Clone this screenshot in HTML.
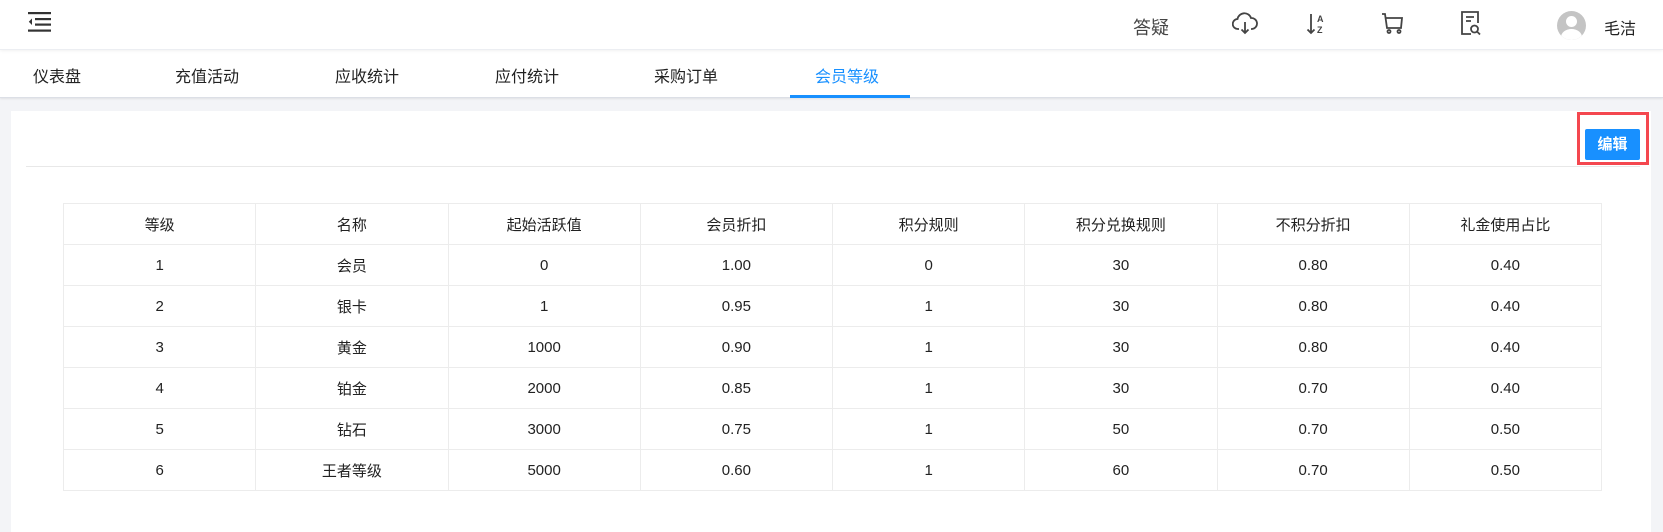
<!DOCTYPE html>
<html><head><meta charset="utf-8"><style>
*{margin:0;padding:0;box-sizing:border-box}
body{width:1663px;height:532px;overflow:hidden;background:#f3f4f7;font-family:"Liberation Sans","Noto Sans CJK SC",sans-serif;color:#222;position:relative}
.hdr{position:absolute;left:0;top:0;width:1663px;height:50px;background:#fff;border-bottom:1px solid #eceef2;box-shadow:0 1px 3px rgba(0,0,0,.06);z-index:2}
.tabs{position:absolute;left:0;top:50px;width:1663px;height:48px;background:#fff;border-bottom:1px solid #dcdfe6;box-shadow:0 1px 2px rgba(0,0,0,.08)}
.tab{position:absolute;top:13px;font-size:16px;color:#222}
.tab.on{color:#1890ff}
.ul{position:absolute;left:790px;top:45px;width:120px;height:3px;background:#1890ff}
.panel{position:absolute;left:11px;top:111px;width:1640px;height:421px;background:#fff}
.div{position:absolute;left:26px;top:166px;width:1614px;height:1px;background:#e8e8e8}
.red{position:absolute;left:1577px;top:112px;width:72px;height:53px;border:3px solid #f4474f}
.btn{position:absolute;left:1585px;top:129px;width:55px;height:31px;background:#1890ff;border-radius:2px;color:#fff;font-size:15px;font-weight:bold;text-align:center;line-height:31px}
table{position:absolute;left:63px;top:203px;width:1539px;border-collapse:collapse;font-size:15px}
td{border:1px solid #ececec;height:41px;text-align:center;width:192px;color:#222}
.ic{position:absolute}
</style></head><body>
<div class="hdr">
<svg class="ic" style="left:28px;top:12px" width="23" height="20" viewBox="0 0 23 20"><rect x="0" y="0" width="23" height="2.2" fill="#333"/><rect x="7" y="6" width="16" height="2.2" fill="#333"/><rect x="7" y="11.5" width="16" height="2.2" fill="#333"/><rect x="0" y="17.5" width="23" height="2.2" fill="#333"/><path d="M4 6.5 L0.8 9.8 L4 13z" fill="#333"/></svg>
<div style="position:absolute;left:1133px;top:14px;font-size:18px;color:#444">答疑</div>
<svg class="ic" style="left:1232px;top:12px" width="26" height="24" viewBox="0 0 26 24" fill="none" stroke="#444" stroke-width="1.8"><path d="M7 17H6a5 5 0 0 1-.5-10A7 7 0 0 1 19 6a5 5 0 0 1 1 11h-1"/><path d="M13 10v11M9.5 17.5L13 21l3.5-3.5"/></svg>
<svg class="ic" style="left:1306px;top:12px" width="24" height="24" viewBox="0 0 24 24"><path d="M5 2v19M1.5 17.5L5 21l3.5-3.5" stroke="#444" stroke-width="1.8" fill="none"/><text x="11" y="10" font-size="9" font-weight="bold" fill="#444" font-family="Liberation Sans">A</text><text x="11" y="21" font-size="9" font-weight="bold" fill="#444" font-family="Liberation Sans">Z</text></svg>
<svg class="ic" style="left:1382px;top:13px" width="22" height="22" viewBox="0 0 22 22" fill="none" stroke="#444" stroke-width="1.8"><path d="M0 1h3l2 14h14l1-10H4"/><circle cx="7" cy="18.5" r="1.5"/><circle cx="17" cy="18.5" r="1.5"/></svg>
<svg class="ic" style="left:1460px;top:11px" width="22" height="26" viewBox="0 0 22 26" fill="none" stroke="#444" stroke-width="1.8"><path d="M11 23H2V1h16v11"/><path d="M6 6h8M6 10h5"/><circle cx="14.5" cy="18" r="3.5"/><path d="M17 20.5l3 3"/></svg>
<div style="position:absolute;left:1557px;top:11px;width:29px;height:29px;border-radius:50%;background:#c4c4c4;overflow:hidden"><div style="position:absolute;left:9px;top:5px;width:11px;height:11px;border-radius:50%;background:#fff"></div><div style="position:absolute;left:4px;top:18px;width:21px;height:16px;border-radius:50%;background:#fff"></div></div>
<div style="position:absolute;left:1604px;top:15px;font-size:16px;color:#222">毛洁</div>
</div>
<div class="tabs">
<div class="tab" style="left:33px">仪表盘</div>
<div class="tab" style="left:175px">充值活动</div>
<div class="tab" style="left:335px">应收统计</div>
<div class="tab" style="left:495px">应付统计</div>
<div class="tab" style="left:654px">采购订单</div>
<div class="tab on" style="left:815px">会员等级</div>
<div class="ul"></div>
</div>
<div class="panel"></div>
<div class="div"></div>
<div class="red"></div>
<div class="btn">编辑</div>
<table>
<tr><td>等级</td><td>名称</td><td>起始活跃值</td><td>会员折扣</td><td>积分规则</td><td>积分兑换规则</td><td>不积分折扣</td><td>礼金使用占比</td></tr>
<tr><td>1</td><td>会员</td><td>0</td><td>1.00</td><td>0</td><td>30</td><td>0.80</td><td>0.40</td></tr>
<tr><td>2</td><td>银卡</td><td>1</td><td>0.95</td><td>1</td><td>30</td><td>0.80</td><td>0.40</td></tr>
<tr><td>3</td><td>黄金</td><td>1000</td><td>0.90</td><td>1</td><td>30</td><td>0.80</td><td>0.40</td></tr>
<tr><td>4</td><td>铂金</td><td>2000</td><td>0.85</td><td>1</td><td>30</td><td>0.70</td><td>0.40</td></tr>
<tr><td>5</td><td>钻石</td><td>3000</td><td>0.75</td><td>1</td><td>50</td><td>0.70</td><td>0.50</td></tr>
<tr><td>6</td><td>王者等级</td><td>5000</td><td>0.60</td><td>1</td><td>60</td><td>0.70</td><td>0.50</td></tr>
</table>
</body></html>
